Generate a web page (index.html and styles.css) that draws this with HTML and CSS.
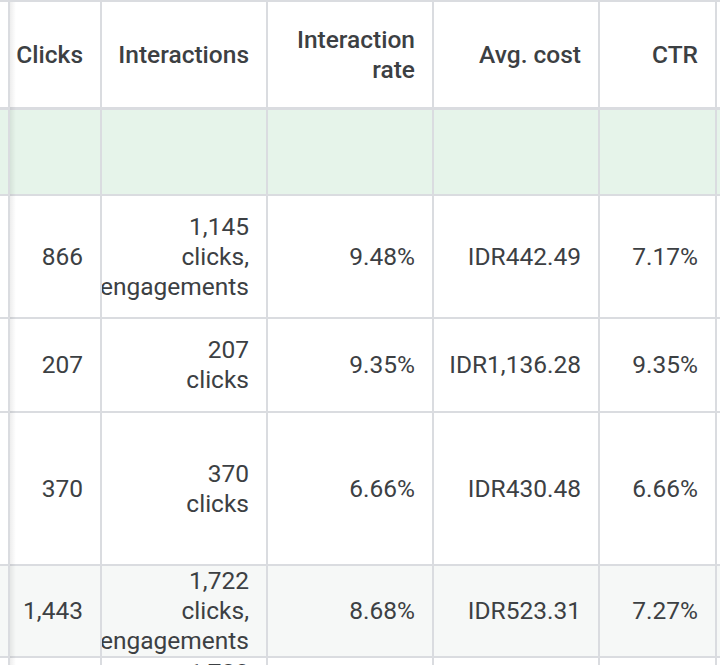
FILE: index.html
```html
<!DOCTYPE html>
<html>
<head>
<meta charset="utf-8">
<link rel="stylesheet" href="styles.css">
</head>
<body>
<div class="table">
  <div class="row head">
    <div class="cell stub"></div>
    <div class="cell"><span>Clicks</span></div>
    <div class="cell"><span>Interactions</span></div>
    <div class="cell"><span>Interaction</span><span>rate</span></div>
    <div class="cell"><span>Avg. cost</span></div>
    <div class="cell"><span>CTR</span></div>
    <div class="cell last"></div>
  </div>
  <div class="row green">
    <div class="cell stub"></div>
    <div class="cell"></div>
    <div class="cell"></div>
    <div class="cell"></div>
    <div class="cell"></div>
    <div class="cell"></div>
    <div class="cell last"></div>
  </div>
  <div class="row r2">
    <div class="cell stub"></div>
    <div class="cell"><span>866</span></div>
    <div class="cell"><span>1,145</span><span>clicks,</span><span>engagements</span></div>
    <div class="cell"><span>9.48%</span></div>
    <div class="cell"><span>IDR442.49</span></div>
    <div class="cell"><span>7.17%</span></div>
    <div class="cell last"></div>
  </div>
  <div class="row r3">
    <div class="cell stub"></div>
    <div class="cell"><span>207</span></div>
    <div class="cell"><span>207</span><span>clicks</span></div>
    <div class="cell"><span>9.35%</span></div>
    <div class="cell"><span>IDR1,136.28</span></div>
    <div class="cell"><span>9.35%</span></div>
    <div class="cell last"></div>
  </div>
  <div class="row r4">
    <div class="cell stub"></div>
    <div class="cell"><span>370</span></div>
    <div class="cell"><span>370</span><span>clicks</span></div>
    <div class="cell"><span>6.66%</span></div>
    <div class="cell"><span>IDR430.48</span></div>
    <div class="cell"><span>6.66%</span></div>
    <div class="cell last"></div>
  </div>
  <div class="row r5 total">
    <div class="cell stub"></div>
    <div class="cell"><span>1,443</span></div>
    <div class="cell"><span>1,722</span><span>clicks,</span><span>engagements</span></div>
    <div class="cell"><span>8.68%</span></div>
    <div class="cell"><span>IDR523.31</span></div>
    <div class="cell"><span>7.27%</span></div>
    <div class="cell last"></div>
  </div>
  <div class="row r6">
    <div class="cell stub"></div>
    <div class="cell"></div>
    <div class="cell top"><span>1,723</span><span>clicks,</span><span>engagements</span></div>
    <div class="cell"></div>
    <div class="cell"></div>
    <div class="cell"></div>
    <div class="cell last"></div>
  </div>
</div>
</body>
</html>
```
FILE: styles.css
```css
html, body {
  margin: 0;
  padding: 0;
  background: #ffffff;
  overflow: hidden;
}
body {
  width: 720px;
  height: 665px;
  font-family: Roboto, "Noto Sans", sans-serif;
  font-size: 24.5px;
  line-height: 30px;
  color: #3c4043;
}
.table {
  position: relative;
  width: 720px;
  border-top: 2px solid #dadce0;
}
.table::before {
  content: "";
  position: absolute;
  top: 0;
  bottom: 0;
  left: 10px;
  width: 6px;
  background: linear-gradient(to right, rgba(0, 0, 0, 0.07), rgba(0, 0, 0, 0));
  pointer-events: none;
}
.row {
  display: grid;
  grid-template-columns: 10px 92px 166px 166px 166px 117px 1fr;
  border-bottom: 2px solid #dadce0;
}
.cell {
  display: flex;
  flex-direction: column;
  justify-content: center;
  align-items: flex-end;
  padding-right: 17px;
  border-right: 2px solid #dadce0;
  overflow: hidden;
  white-space: nowrap;
  text-align: right;
}
.cell span {
  display: block;
}
.cell.stub {
  padding-right: 0;
}
.cell.last {
  border-right: none;
  padding-right: 0;
}
.cell.top {
  justify-content: flex-start;
}
.head {
  height: 105px;
  border-bottom-width: 3px;
  font-weight: 500;
  color: #3c4043;
}
.green {
  height: 84px;
  background: #e6f4ea;
}
.r2 { height: 121px; }
.r3 { height: 92px; }
.r4 { height: 151px; }
.r5 { height: 90px; }
.r6 { height: 90px; }
.total {
  background: #f6f8f7;
}
```
